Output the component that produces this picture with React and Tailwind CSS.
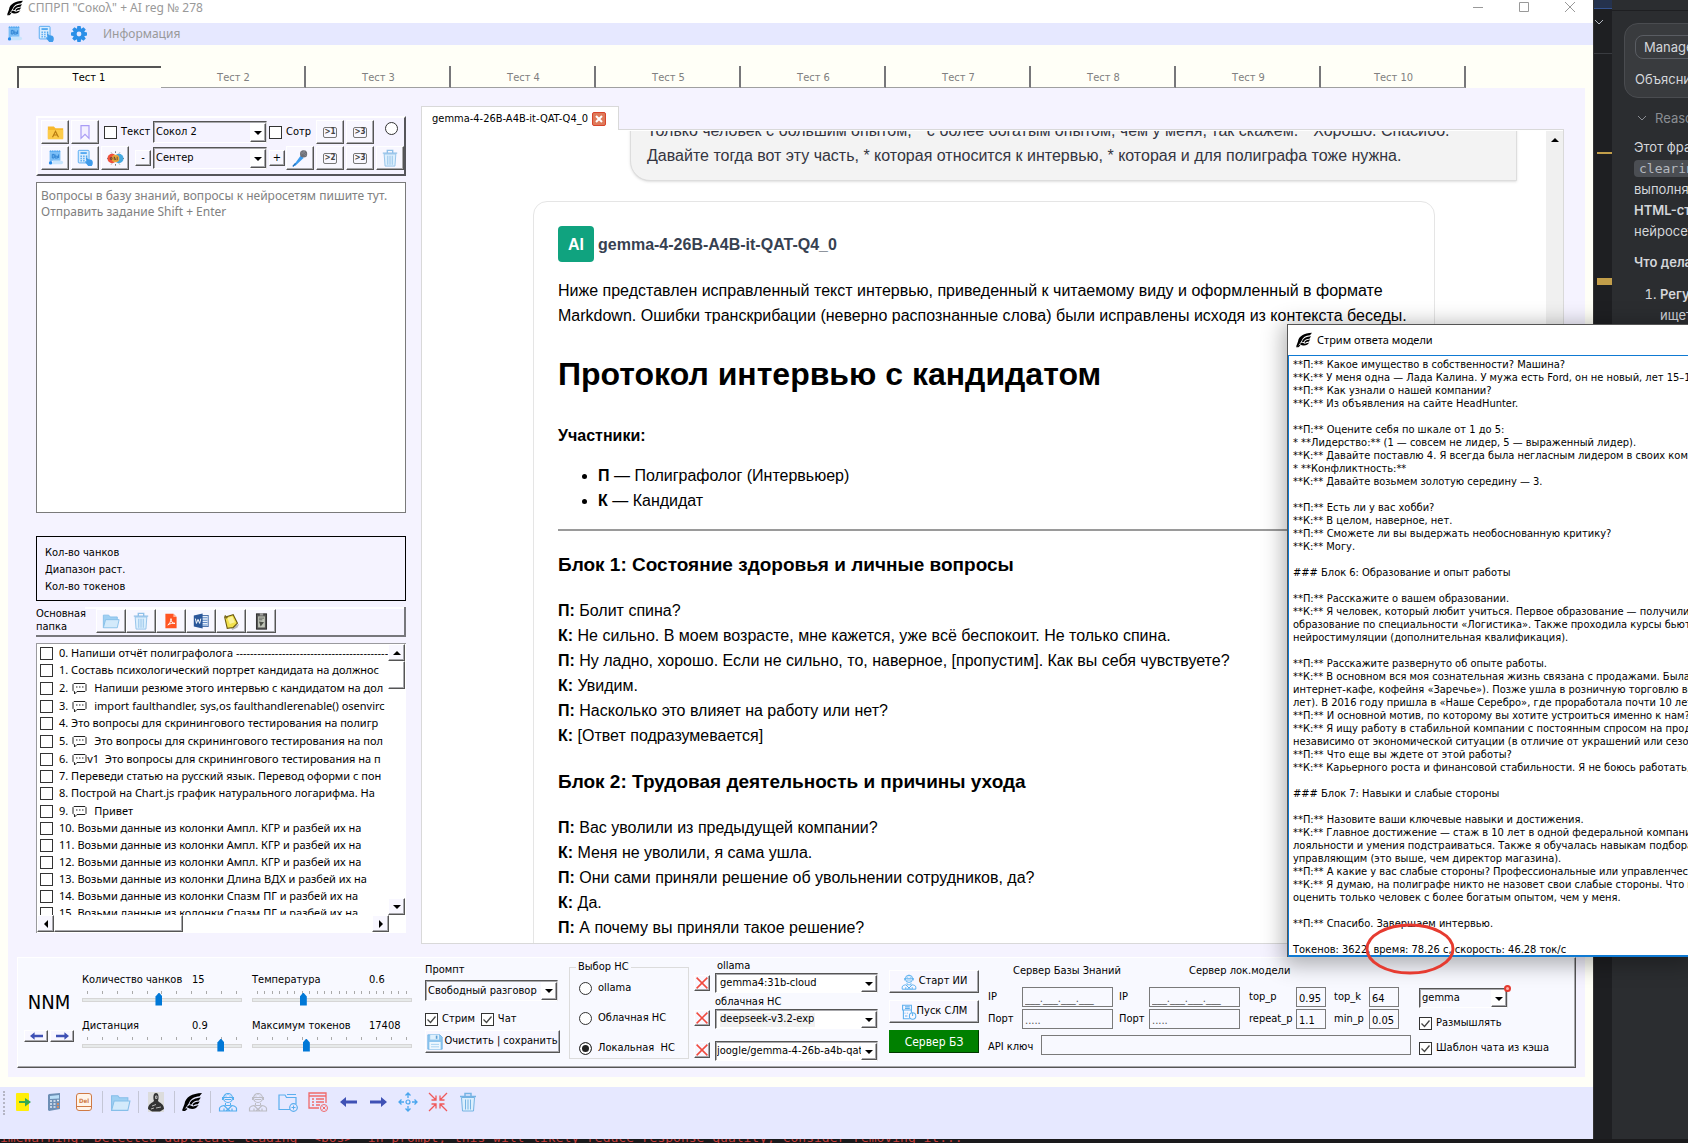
import React from "react";

const ui = "font-['DejaVu_Sans_Condensed','DejaVu_Sans',sans-serif]";
const segoe = "font-['Noto_Sans','Open_Sans',sans-serif]";
const raised =
  "border border-t-white border-l-white border-r-[#555555] border-b-[#555555] shadow-[inset_-1px_-1px_0_#a8a8ac]";

/* ---------- icons ---------- */

function Svg({ size = 20, box = 20, className = "", children }) {
  return (
    <svg width={size} height={size} viewBox={`0 0 ${box} ${box}`} fill="none" className={`shrink-0 ${className}`} aria-hidden="true">
      {children}
    </svg>
  );
}

function Falcon({ size = 16 }) {
  return (
    <Svg size={size}>
      <g fill="#000">
        <path d="M2.500 12C3.500 5 10 1.500 20 1L17.500 4.200C12 4.500 8.500 7 7 11L5 14L2 18L0 18.500Z" />
        <path d="M8 10.500C10 7.500 13 6 18.800 5.400L16.800 8.400C13 8.500 11 9.800 9.500 12.500L7.500 12.500Z" />
        <path d="M10.500 12.500C11.800 10.400 14 9.600 17.800 9.400L15.800 12.200C13.500 12.200 12.500 12.600 11.500 13.800Z" />
        <path d="M4.500 15L7.500 13L11 14.600L16.800 13L14 16C11 17.500 8 17.300 4.500 15Z" />
        <path d="M0 19L4 16L5.500 17L3 19Z" />
      </g>
    </Svg>
  );
}

function Scroll() {
  return (
    <Svg size={18}>
      <path d="M4 2h12v11H7l-1.500 3H4z" fill="#7cbff7" />
      <path d="M4 3l1-2 1 2 1-2 1 2 1-2 1 2 1-2 1 2 1-2 1 2 1-2 1 2" fill="#4aa2ee" />
      <path d="M9 6H7v4h2zM10 6v4h3V8h-3M14 6v4" stroke="#2a7fd0" strokeWidth="1" />
      <path d="M8 13h9a2 2 0 0 1 0 4H6z" fill="#c8e4fc" />
      <circle cx="5" cy="15.500" r="1.800" fill="#2388ea" />
    </Svg>
  );
}

function CalcHand() {
  return (
    <Svg size={18}>
      <rect x="2.500" y="1.500" width="12" height="14" rx="1" fill="#d9ecfd" stroke="#4ea6f0" />
      <path d="M5 4.500h7" stroke="#4ea6f0" strokeWidth="2" />
      <path d="M5 8h1.500M8 8h1.500M11 8h1.500M5 10.500h1.500M8 10.500h1.500M5 13h1.500M8 13h1.500" stroke="#4ea6f0" strokeWidth="1.500" />
      <path d="M11 9.500c1.500-1 2 0 2 1.500l4 1c1.500.5 2 3 1.500 5l-1 2h-4l-3.500-4.500c0-1 1-1 1.500-.5z" fill="#3f9bea" />
    </Svg>
  );
}

function Gear() {
  const teeth = [0, 45, 90, 135, 180, 225, 270, 315];
  return (
    <Svg size={16}>
      {teeth.map((a) => (
        <path key={a} d="M8 0h4l1 5H7z" fill="#2b8fe8" transform={`rotate(${a} 10 10)`} />
      ))}
      <circle cx="10" cy="10" r="5" stroke="#2b8fe8" strokeWidth="4" />
    </Svg>
  );
}

function FolderA() {
  return (
    <Svg size={17}>
      <path d="M1 3h7l2 2h9v12H1z" fill="#f7b82c" />
      <path d="M1 7h18v11H1z" fill="#fccb4a" />
      <path d="M6.500 15.500L10 8.500l3.500 7M8 13h4.500" stroke="#b87a10" strokeWidth="1.300" />
    </Svg>
  );
}

function Bookmark() {
  return (
    <Svg size={16}>
      <path d="M5 2h10v16l-5-5-5 5z" fill="#f3f0ff" stroke="#a99cf5" strokeWidth="1.500" />
    </Svg>
  );
}

function Rna() {
  return (
    <Svg size={17}>
      <circle cx="6" cy="10" r="5.500" fill="#f0513c" />
      <circle cx="14" cy="10" r="5.500" fill="#45a9e0" />
      <circle cx="10" cy="10" r="4.500" fill="#e9a63b" />
      <path d="M8.500 8v4M8.500 8l2 4M12 8v4M4 9h2v2H4z" stroke="#5b4630" strokeWidth="1" />
      <path d="M10 1.500v2M10 16.500v2M0 10h1M19 10h1M5 3l.7 1M15 3l-.7 1M5 17l.7-1M15 17l-.7-1" stroke="#666" />
    </Svg>
  );
}

function Slot({ n }) {
  return (
    <span className="flex h-[11px] w-[14px] items-center justify-center rounded-[2px] border border-[#777] text-[8px] leading-[8px] font-bold text-[#444]">
      &gt;{n}
    </span>
  );
}

function Mic() {
  return (
    <Svg size={18}>
      <path d="M3 18L11 7l3 3L4.500 19z" fill="#3b9bee" />
      <circle cx="14" cy="5.500" r="4" fill="#6d6f76" />
      <path d="M11 3l6 5M13 2l4 4M11 6l5-4" stroke="#8e9097" strokeWidth=".7" />
      <path d="M2 19.500L5 16" stroke="#1d6fc0" strokeWidth="1.500" />
    </Svg>
  );
}

function Trash({ size = 18, stroke = "#8fc0e8" }) {
  return (
    <Svg size={size}>
      <path d="M3.500 5.500h13l-1 13.500h-11z" fill="#dceffd" stroke={stroke} />
      <path d="M2 4.500h16M7 4V1.500h6V4" stroke={stroke} strokeWidth="1.500" />
      <path d="M7.500 7.500v10M10 7.500v10M12.500 7.500v10" stroke={stroke} />
    </Svg>
  );
}

function Folder({ size = 18 }) {
  return (
    <Svg size={size}>
      <path d="M1.500 17.500v-14h6l1.500 2h8v4" fill="#9fd0f3" stroke="#86bfe9" />
      <path d="M1.500 17.500l2.500-9h15l-2 9z" fill="#d3eafb" stroke="#86bfe9" />
    </Svg>
  );
}

function Pdf() {
  return (
    <Svg size={16}>
      <path d="M3 1h10l4 4v14H3z" fill="#ff5422" />
      <path d="M13 1v4h4z" fill="#ffb29a" />
      <path d="M6 15c2-1 4-5 4-8 0 4 2 6 5 6-3-.5-6 0-9 2z" stroke="#fff" strokeWidth="1.200" />
    </Svg>
  );
}

function Word() {
  return (
    <Svg size={16}>
      <rect x="9" y="3" width="10" height="14" fill="#e9f0fa" stroke="#2b579a" />
      <path d="M11 6h7M11 9h7M11 12h7M11 15h7" stroke="#5f89c6" strokeWidth="1.300" />
      <path d="M1 3l11-2.500v19L1 17z" fill="#2b579a" />
      <path d="M3 7l1.300 6L6.300 8l2 5L9.800 7" stroke="#fff" strokeWidth="1.200" />
    </Svg>
  );
}

function Note() {
  return (
    <Svg size={17}>
      <path d="M9 17l10-4-2 4-6 3z" fill="#777" opacity=".5" />
      <path d="M2 5l10-3 5 10-5 5-7 1z" fill="#f2e14c" stroke="#6b5a10" strokeWidth="1.300" />
      <path d="M5 6l6-2 3 7-6 2z" fill="#fbf29b" />
      <path d="M2 3l3 3" stroke="#7a6a20" strokeWidth="2" />
    </Svg>
  );
}

function Clipboard() {
  return (
    <Svg size={17}>
      <rect x="4" y="1" width="12" height="18" fill="#555" stroke="#222" />
      <rect x="6" y="4" width="8" height="13" fill="#bfc4b8" />
      <path d="M7 10l6 1-4 5z" fill="#4d5148" />
      <path d="M7 6h6M7 8h4" stroke="#555" />
      <rect x="8" y="0" width="4" height="3" fill="#999" />
    </Svg>
  );
}

function Bubble() {
  return (
    <svg width="15" height="13" viewBox="0 0 15 13" fill="none" className="shrink-0" aria-hidden="true">
      <path d="M2 1.500h11l1 1v6l-1 1H5l-2.500 2.500v-2.500H2l-1-1v-6z" stroke="#222" />
      <path d="M4 5h1.500M7 5h1.500M10 5h1.500" stroke="#222" />
    </svg>
  );
}

function Arrow({ dir = "left", w = 17 }) {
  return (
    <svg width={w} height={Math.round(w / 1.700)} viewBox="0 0 17 10" aria-hidden="true">
      <path d={dir === "left" ? "M0 5l6-5v3.500h11v3H6V10z" : "M17 5l-6-5v3.500H0v3h11V10z"} fill="#3f51b5" />
    </svg>
  );
}

function Floppy() {
  return (
    <Svg size={16}>
      <path d="M1 1h15l3 3v15H1z" fill="#8fc6ee" stroke="#6ab0e4" />
      <rect x="4" y="1" width="11" height="6" fill="#dff0fc" />
      <rect x="11" y="2" width="2" height="4" fill="#5d9fd4" />
      <rect x="3" y="10" width="14" height="9" fill="#eef8ff" />
      <path d="M5 13h10M5 16h10" stroke="#9ccbee" />
    </Svg>
  );
}

function Robot({ size = 18, color = "#53aeef" }) {
  return (
    <Svg size={size}>
      <circle cx="10" cy="6" r="4.500" stroke={color} strokeWidth="1.200" />
      <path d="M5.500 5.500h9M7 7.500h6M10 1v2M7.500 4h1M11.500 4h1M7.500 11v2.500h5V11M4.500 5v3M15.500 5v3" stroke={color} />
      <path d="M1.500 19v-2.500c0-2 2-2.500 4.500-3l4 4 4-4c2.500.5 4.500 1 4.500 3V19zM6 19v-2.500M14 19v-2.500M8 19l2-2 2 2" stroke={color} strokeWidth="1.200" />
    </Svg>
  );
}

function ServerPower() {
  return (
    <Svg size={16}>
      <path d="M2 1.500h11v6H2zM2 7.500h11M3 7.500v11h8M13 8v3M5 3.500h6M5 5.500h6M5 11v1M8 11v1M5 15h3" stroke="#5fb0ee" strokeWidth="1.400" />
      <circle cx="14.500" cy="15" r="4" stroke="#5fb0ee" strokeWidth="1.300" />
      <path d="M14.500 11v4" stroke="#5fb0ee" strokeWidth="1.300" />
    </Svg>
  );
}

function RedX() {
  return (
    <Svg size={12}>
      <path d="M1 1l18 18M19 1L1 19" stroke="#f04a3e" strokeWidth="2.500" />
    </Svg>
  );
}

function ExitIcon() {
  return (
    <Svg size={20}>
      <rect x="2" y="1" width="13" height="18" rx="1" fill="#ffee0a" />
      <path d="M5 9h6V6l6 4-6 4.500V11H5z" fill="#35a852" />
    </Svg>
  );
}

function Calculator() {
  return (
    <Svg size={20}>
      <path d="M5 2l11-1v16l-11 2-1-1V3z" fill="#6d8fb5" />
      <path d="M6 4l9-1v3.500l-9 .5z" fill="#b9def8" />
      <path d="M6 9h2M9.500 9h2M13 8.500h2M6 12h2M9.500 12h2M6 15h2M9.500 15h2" stroke="#e4edf6" strokeWidth="1.700" />
      <path d="M13 12h2M13 15h2" stroke="#f08a4b" strokeWidth="1.700" />
    </Svg>
  );
}

function DelKey() {
  return (
    <span className="relative flex h-[18px] w-[16px] justify-center rounded-[3px] border border-[#cf7a45] bg-[#fff4ea] pt-px text-[6px] leading-[11px] font-bold text-[#cf7a45]">
      Del
      <span className="absolute inset-x-0 bottom-[3px] h-px bg-[#cf7a45]" />
    </span>
  );
}

function Portrait() {
  return (
    <Svg size={20}>
      <rect x="2" y="0" width="16" height="20" fill="#dcdcdc" />
      <path d="M2 17c0-5 4-6 6-8-1-3-1-8 2-8s3 5 2 8c2 2 6 3 6 8l-4 2.500H6z" fill="#333" />
      <path d="M9.500 4h1.500v2.500h-1.500zM6 14l4-1.500M10 16l5-1M5 17l3-1" stroke="#b5b5b5" />
    </Svg>
  );
}

function FolderPlus() {
  return (
    <Svg size={20}>
      <path d="M12 17.500H1V3h6l1.500 2.500H18V12M9 2.500h9" stroke="#5aaeee" strokeWidth="1.200" />
      <circle cx="15.500" cy="15.500" r="3.800" stroke="#5aaeee" strokeWidth="1.200" />
      <path d="M13.500 15.500h4M15.500 13.500v4" stroke="#5aaeee" />
    </Svg>
  );
}

function ListRemove() {
  return (
    <Svg size={20}>
      <path d="M11 16H1V1h17v10M1 4h17M4 7h2M8 7h8M4 10h2M8 10h8M4 13h2M8 13h4" stroke="#f0696b" strokeWidth="1.300" />
      <circle cx="16" cy="16" r="3.500" stroke="#f0696b" />
      <path d="M14.500 14.500l3 3M17.500 14.500l-3 3" stroke="#f0696b" />
    </Svg>
  );
}

function Expand() {
  return (
    <Svg size={20}>
      <circle cx="10" cy="10" r="2" stroke="#4aa6ee" strokeWidth="1.200" />
      <path d="M10 1v5M10 14v5M1 10h5M14 10h5M7.500 3.500L10 1l2.500 2.500M7.500 16.500L10 19l2.500-2.500M3.500 7.500L1 10l2.500 2.500M16.500 7.500L19 10l-2.500 2.500" stroke="#4aa6ee" strokeWidth="1.300" />
    </Svg>
  );
}

function Shrink() {
  return (
    <Svg size={20}>
      <path d="M1 1l7 7M19 1l-7 7M1 19l7-7M19 19l-7-7M8 3.500V8H3.500M12 3.500V8h4.500M8 16.500V12H3.500M12 16.500V12h4.500" stroke="#f0595b" strokeWidth="1.300" />
    </Svg>
  );
}

function Tri({ dir }) {
  const d = { up: "M0 5L4 1l4 4z", down: "M0 1h8L4 5z", left: "M5 0v8L1 4z", right: "M1 0v8l4-4z" }[dir];
  return (
    <svg width="8" height="8" viewBox={dir === "up" || dir === "down" ? "0 -1 8 8" : "-1 0 8 8"} aria-hidden="true">
      <path d={d} fill="#000" />
    </svg>
  );
}

/* ---------- controls ---------- */

function Btn({ label, className = "h-6 w-7", children, ...rest }) {
  return (
    <button type="button" aria-label={label} className={`flex shrink-0 items-center justify-center bg-[#f8f7ff] ${raised} ${className}`} {...rest}>
      {children}
    </button>
  );
}

function Select({ label, value, className = "", selected = false, align = "pl-1 pr-4" }) {
  return (
    <span className={`relative flex shrink-0 border border-t-[#555] border-l-[#555] border-r-[#d8d8dc] border-b-white shadow-[inset_1px_1px_0_#a8a8ac] ${className}`}>
      <select aria-label={label} className={`w-full appearance-none overflow-hidden bg-transparent pt-px text-clip outline-none ${align}`}>
        <option>{value}</option>
      </select>
      <span className={`pointer-events-none absolute top-px right-0 bottom-0 flex w-4 items-center justify-center bg-white ${raised}`}>
        <Tri dir="down" />
      </span>
      {selected && <span className="pointer-events-none absolute top-[3px] left-1 h-[14px] w-[95px] bg-black/5" />}
    </span>
  );
}

function Check({ label, checked = false, className = "gap-1" }) {
  return (
    <label className={`flex shrink-0 items-center ${className}`}>
      <span className="grid">
        <input
          type="checkbox"
          defaultChecked={checked}
          className="peer col-start-1 row-start-1 h-[13px] w-[13px] appearance-none border border-[#333] bg-white"
        />
        <svg viewBox="0 0 13 13" className="pointer-events-none invisible col-start-1 row-start-1 h-[13px] w-[13px] peer-checked:visible" fill="none" aria-hidden="true">
          <path d="M2.500 6.500l3 3 5-6" stroke="#444" strokeWidth="1.300" />
        </svg>
      </span>
      <span className="whitespace-nowrap">{label}</span>
    </label>
  );
}

function Radio({ label, name, checked = false, bare = false }) {
  return (
    <label className="flex h-[14px] items-center gap-[6px]">
      <input
        type="radio"
        name={name}
        defaultChecked={checked}
        aria-label={label}
        className="h-[13px] w-[13px] shrink-0 appearance-none rounded-full border border-[#333] bg-white checked:bg-[#222] checked:shadow-[inset_0_0_0_2px_#fff]"
      />
      {!bare && <span className="whitespace-pre">{label}</span>}
    </label>
  );
}

function Slider({ id, label, value, min, max, now, ticks, valueAt }) {
  return (
    <div className="w-[160px]">
      <div className="flex h-4 items-center">
        <label htmlFor={id} className={`whitespace-nowrap ${valueAt}`}>{label}</label>
        <output htmlFor={id}>{value}</output>
      </div>
      <div className="mt-[3px] flex h-[3px] justify-between px-[5px]">
        {Array.from({ length: ticks }, (_, i) => (
          <span key={i} className="w-px bg-[#aaaaaa]" />
        ))}
      </div>
      <input
        id={id}
        type="range"
        min={min}
        max={max}
        step="any"
        defaultValue={now}
        className="-mt-px block h-[13px] w-full appearance-none bg-transparent [&::-webkit-slider-runnable-track]:h-1 [&::-webkit-slider-runnable-track]:border [&::-webkit-slider-runnable-track]:border-[#d6d6d6] [&::-webkit-slider-runnable-track]:bg-[#e7eaea] [&::-webkit-slider-thumb]:-mt-[6px] [&::-webkit-slider-thumb]:h-[13px] [&::-webkit-slider-thumb]:w-[7px] [&::-webkit-slider-thumb]:appearance-none [&::-webkit-slider-thumb]:bg-[#0078d7] [&::-webkit-slider-thumb]:[clip-path:polygon(50%_0,100%_30%,100%_100%,0_100%,0_30%)]"
      />
    </div>
  );
}

function Field({ label, value = "", className = "" }) {
  return <input type="text" aria-label={label} defaultValue={value} className={`h-5 min-w-0 border border-[#7a7a7a] bg-[#f8f9ff] px-[2px] pt-[2px] outline-none ${className}`} />;
}

/* ---------- left column ---------- */

const prompts = [
  ["0. Напиши отчёт полиграфолога -------------------------------------------"],
  ["1. Составь психологический портрет кандидата на должнос"],
  ["2.", "Напиши резюме этого интервью с кандидатом на дол"],
  ["3.", "import faulthandler, sys,os faulthandlerenable() osenvirc"],
  ["4. Это вопросы для скринингового тестирования на полигр"],
  ["5.", "Это вопросы для скринингового тестирования на пол"],
  ["6.", "v1  Это вопросы для скринингового тестирования на п"],
  ["7. Переведи статью на русский язык. Перевод оформи с пон"],
  ["8. Построй на Chart.js график натурального логарифма. На"],
  ["9.", "Привет"],
  ["10. Возьми данные из колонки Ампл. КГР и разбей их на"],
  ["11. Возьми данные из колонки Ампл. КГР и разбей их на"],
  ["12. Возьми данные из колонки Ампл. КГР и разбей их на"],
  ["13. Возьми данные из колонки Длина ВДХ и разбей их на"],
  ["14. Возьми данные из колонки Спазм ПГ и разбей их на"],
  ["15. Возьми данные из колонки Спазм ПГ и разбей их на"],
];

function ToolPanel() {
  return (
    <div className="flex h-[60px] shrink-0 flex-col gap-[2px] border-2 border-t-white border-l-white border-r-[#55555a] border-b-[#55555a] pt-[2px] pl-[3px]">
      <div className="flex h-6 items-center">
        <Btn label="Папка"><FolderA /></Btn>
        <Btn label="Закладка" className="ml-[2px] h-6 w-7"><Bookmark /></Btn>
        <Check label="Текст" className="ml-[5px] w-[49px] gap-1" />
        <Select label="Модель" value="Сокол 2" className="h-[22px] w-[114px]" align="pl-[2px] pr-4" />
        <Check label="Сотр" className="ml-[2px] w-[47px] gap-1" />
        <Btn label="Слот 1"><Slot n="1" /></Btn>
        <Btn label="Слот 3" className="ml-[2px] h-6 w-7"><Slot n="3" /></Btn>
        <span className="-mt-2 ml-[11px]"><Radio label="Запись" name="rec" bare /></span>
      </div>
      <div className="flex h-6 items-center">
        <Btn label="Свиток"><Scroll /></Btn>
        <Btn label="Калькулятор" className="ml-[2px] h-6 w-7"><CalcHand /></Btn>
        <Btn label="РНК" className="ml-[2px] h-6 w-7"><Rna /></Btn>
        <Btn label="Меньше" className="ml-[6px] h-4 w-4 leading-[12px]">-</Btn>
        <Select label="Голос" value="Сентер" className="ml-[2px] h-[22px] w-[114px]" align="pl-[2px] pr-4" />
        <Btn label="Больше" className="ml-[2px] h-4 w-4 leading-[12px]">+</Btn>
        <Btn label="Микрофон" className="ml-px h-6 w-7"><Mic /></Btn>
        <Btn label="Слот 2" className="ml-[2px] h-6 w-7"><Slot n="2" /></Btn>
        <Btn label="Слот 4" className="ml-[2px] h-6 w-7"><Slot n="3" /></Btn>
        <Btn label="Удалить" className="ml-[2px] h-6 w-7"><Trash /></Btn>
      </div>
    </div>
  );
}

function PromptList() {
  return (
    <div className="flex h-[290px] shrink-0 flex-col border-t border-l border-[#9a9a9e] bg-white">
      <div className="flex h-[271px] shrink-0">
        <ul className={`flex-1 overflow-hidden pt-px pl-[3px] text-[11px] ${segoe}`}>
          {prompts.map(([head, tail], i) => (
            <li key={i} className={tail ? "h-[18px]" : "h-[17px]"}>
              <label className="flex h-full items-center gap-[6px]">
                <input type="checkbox" className="h-[13px] w-[13px] shrink-0 appearance-none border border-[#333] bg-white" />
                {tail ? (
                  <span className="flex items-center gap-1 whitespace-pre">
                    {head}
                    <span className="flex items-center">
                      <Bubble />
                      <span className={tail.startsWith("v1") ? "" : "ml-[7px]"}>{tail}</span>
                    </span>
                  </span>
                ) : (
                  <span className="whitespace-nowrap">{head}</span>
                )}
              </label>
            </li>
          ))}
        </ul>
        <div className="flex w-[18px] shrink-0 flex-col pr-px">
          <Btn label="Вверх" className="h-[17px] w-[17px]"><Tri dir="up" /></Btn>
          <div className={`h-7 w-[17px] bg-white ${raised}`} />
          <Btn label="Вниз" className="mt-auto h-[17px] w-[17px]"><Tri dir="down" /></Btn>
        </div>
      </div>
      <div className="flex h-[17px] w-[352px] shrink-0">
        <Btn label="Влево" className="h-[17px] w-[17px]"><Tri dir="left" /></Btn>
        <div className={`h-[17px] w-[129px] bg-white ${raised}`} />
        <Btn label="Вправо" className="ml-auto h-[17px] w-[17px]"><Tri dir="right" /></Btn>
      </div>
    </div>
  );
}

function LeftColumn() {
  const files = [
    ["Открыть", <Folder />],
    ["Удалить", <Trash />],
    ["PDF", <Pdf />],
    ["Word", <Word />],
    ["Заметка", <Note />],
    ["Буфер", <Clipboard />],
  ];
  return (
    <section className="flex w-[370px] shrink-0 flex-col pt-7 pb-6">
      <ToolPanel />
      <textarea
        aria-label="Вопрос"
        placeholder={"Вопросы в базу знаний, вопросы к нейросетям пишите тут.\nОтправить задание Shift + Enter"}
        className={`mt-[6px] min-h-0 flex-1 resize-none border border-[#7a7a7a] bg-white px-1 py-[5px] text-[12px] leading-4 outline-none placeholder:text-[#808080] ${segoe}`}
      />
      <div className="mt-[23px] flex h-[65px] shrink-0 flex-col justify-center border border-black pt-px pl-2 leading-[17px]">
        <p>Кол-во чанков</p>
        <p>Диапазон раст.</p>
        <p>Кол-во токенов</p>
      </div>
      <div className="mt-[6px] flex h-[30px] shrink-0 items-start border-r-2 border-b-2 border-[#77777c]">
        <p className="w-[49px] leading-[13px]">Основная папка</p>
        <div className="flex flex-1 border-t-2 border-white pl-[11px]">
          {files.map(([name, icon]) => (
            <Btn key={name} label={name} className="h-6 w-[30px]">{icon}</Btn>
          ))}
        </div>
      </div>
      <div className="mt-[6px]">
        <PromptList />
      </div>
    </section>
  );
}

/* ---------- document view ---------- */

function Says({ who, children }) {
  return (
    <p>
      <b>{who}:</b> {children}
    </p>
  );
}

function DocumentView() {
  return (
    <section className="flex min-w-0 flex-1 flex-col pt-[18px] pb-[13px]">
      <div className="relative z-10 -mb-px flex h-6 w-[198px] items-center gap-1 border border-b-0 border-[#d9d9d9] bg-white pl-[10px]">
        <span className="pt-px">gemma-4-26B-A4B-it-QAT-Q4_0</span>
        <button type="button" aria-label="Закрыть" className="flex h-[14px] w-[14px] items-center justify-center rounded-[2px] border border-[#d9442b] bg-[#de7a5a]">
          <Svg size={8} box={8}><path d="M1 1l6 6M7 1L1 7" stroke="#fff" strokeWidth="2" /></Svg>
        </button>
      </div>
      <div className="flex min-h-0 flex-1 border border-[#d9d9d9] bg-white pt-px">
        <div className="min-w-0 flex-1 overflow-hidden font-['Liberation_Sans',Arial,sans-serif] text-[16px] leading-[25px] text-black">
          <div className="-mt-[14px] mr-[29px] ml-[208px] rounded-bl-[20px] border border-[#dddddd] bg-[#f3f3f3] px-4 pb-3 text-[#343541] shadow-sm">
            <p className="whitespace-nowrap">Только человек с большим опытом, * с более богатым опытом, чем у меня, так скажем. * Хорошо. Спасибо.</p>
            <p className="whitespace-nowrap">Давайте тогда вот эту часть, * которая относится к интервью, * которая и для полиграфа тоже нужна.</p>
          </div>
          <article className="mx-[111px] mt-5 rounded-[14px] border border-[#e5e5e5] p-6">
            <div className="flex items-center gap-1">
              <span className="flex h-9 w-9 items-center justify-center rounded bg-[#10a37f] font-bold text-white">AI</span>
              <b className="text-[#374151]">gemma-4-26B-A4B-it-QAT-Q4_0</b>
            </div>
            <p className="mt-4">
              Ниже представлен исправленный текст интервью, приведенный к читаемому виду и оформленный в формате Markdown. Ошибки транскрибации (неверно распознанные слова) были исправлены исходя из контекста беседы.
            </p>
            <h1 className="mt-[26px] text-[32px] leading-10 font-bold">Протокол интервью с кандидатом</h1>
            <p className="mt-[29px] font-bold">Участники:</p>
            <ul className="mt-[15px] list-disc pl-10">
              <li><b>П</b> — Полиграфолог (Интервьюер)</li>
              <li><b>К</b> — Кандидат</li>
            </ul>
            <hr className="mt-4 border-t-2 border-[#9a9a9a]" />
            <h3 className="mt-5 mb-[19px] text-[19px] leading-7 font-bold">Блок 1: Состояние здоровья и личные вопросы</h3>
            <Says who="П">Болит спина?</Says>
            <Says who="К">Не сильно. В моем возрасте, мне кажется, уже всё беспокоит. Не только спина.</Says>
            <Says who="П">Ну ладно, хорошо. Если не сильно, то, наверное, [пропустим]. Как вы себя чувствуете?</Says>
            <Says who="К">Увидим.</Says>
            <Says who="П">Насколько это влияет на работу или нет?</Says>
            <Says who="К">[Ответ подразумевается]</Says>
            <h3 className="mt-5 mb-[19px] text-[19px] leading-7 font-bold">Блок 2: Трудовая деятельность и причины ухода</h3>
            <Says who="П">Вас уволили из предыдущей компании?</Says>
            <Says who="К">Меня не уволили, я сама ушла.</Says>
            <Says who="П">Они сами приняли решение об увольнении сотрудников, да?</Says>
            <Says who="К">Да.</Says>
            <Says who="П">А почему вы приняли такое решение?</Says>
          </article>
        </div>
        <div className="flex w-[17px] shrink-0 justify-center bg-[#f0f0f0] pt-[5px]">
          <Tri dir="up" />
        </div>
      </div>
    </section>
  );
}

/* ---------- settings strip ---------- */

function Settings() {
  return (
    <section className="mx-[9px] flex h-[111px] shrink-0 items-start border border-t-white border-l-white border-r-[#555] border-b-[#555] bg-[#f8f9ff] pt-px pl-[6px] shadow-[inset_-1px_-1px_0_#a8a8ac]">
      <div className="w-[50px] shrink-0 pt-[31px]">
        <p className="text-center text-[20px] leading-6">NNM</p>
        <div className="mt-4 flex gap-[2px]">
          <Btn label="Назад" className="h-3 w-6"><Arrow w={13} /></Btn>
          <Btn label="Вперёд" className="h-3 w-6"><Arrow w={13} dir="right" /></Btn>
        </div>
      </div>
      <div className="ml-2 flex shrink-0 flex-col gap-3 pt-[13px]">
        <Slider id="chunks" label="Количество чанков" value="15" min={0} max={100} now={48} ticks={11} valueAt="w-[110px]" />
        <Slider id="distance" label="Дистанция" value="0.9" min={0} max={100} now={89} ticks={11} valueAt="w-[110px]" />
      </div>
      <div className="ml-[10px] flex shrink-0 flex-col gap-3 pt-[13px]">
        <Slider id="temp" label="Температура" value="0.6" min={0} max={100} now={31} ticks={21} valueAt="w-[117px]" />
        <Slider id="maxtok" label="Максимум токенов" value="17408" min={0} max={100} now={33} ticks={11} valueAt="w-[117px]" />
      </div>
      <div className="ml-[13px] w-[135px] shrink-0 pt-[3px]">
        <p className="leading-[15px]">Промпт</p>
        <Select label="Промпт" value="Свободный разговор" className="mt-[3px] h-[21px] w-[133px]" align="pl-[2px] pr-4" />
        <div className="mt-[11px] flex h-[14px] items-center gap-[6px]">
          <Check label="Стрим" checked />
          <Check label="Чат" checked />
        </div>
        <Btn className="mt-1 h-[23px] w-[135px] gap-px">
          <Floppy />
          <span className="whitespace-nowrap">Очистить | сохранить</span>
        </Btn>
      </div>
      <fieldset className="ml-[9px] h-[100px] w-[120px] shrink-0 border border-[#dcdcdc] pl-[9px]">
        <legend className="ml-[-3px] px-[2px] leading-4">Выбор НС</legend>
        <div className="flex flex-col gap-4 pt-[6px]">
          <Radio name="net" label="ollama" />
          <Radio name="net" label="Облачная НС" />
          <Radio name="net" label="Локальная  НС" checked />
        </div>
      </fieldset>
      <div className="ml-[5px] grid shrink-0 grid-cols-[16px_163px] grid-rows-[14px_20px_2px_14px_20px_12px_20px] gap-x-[5px]">
        <span className="col-start-2 row-start-1 pl-[2px] leading-[14px]">ollama</span>
        <Btn label="Удалить ollama" className="col-start-1 row-start-2 mt-[2px] h-4 w-4"><RedX /></Btn>
        <Select label="ollama" value="gemma4:31b-cloud" className="col-start-2 row-start-2 bg-white" />
        <span className="col-start-2 row-start-4 leading-[14px]">облачная НС</span>
        <Btn label="Удалить облачную" className="col-start-1 row-start-5 mt-px h-4 w-4"><RedX /></Btn>
        <Select label="облачная НС" value="deepseek-v3.2-exp" selected className="col-start-2 row-start-5 bg-white" />
        <Btn label="Удалить локальную" className="col-start-1 row-start-7 mt-px h-4 w-4"><RedX /></Btn>
        <Select label="локальная НС" value="joogle/gemma-4-26b-a4b-qat" className="col-start-2 row-start-7 bg-white" align="pl-[1px] pr-4" />
      </div>
      <div className="ml-[11px] flex w-[90px] shrink-0 flex-col gap-[7px] pt-[11px]">
        <Btn className="h-[23px] gap-[2px]"><Robot size={16} /> Старт ИИ</Btn>
        <Btn className="h-[23px]"><ServerPower /> Пуск СЛМ</Btn>
        <button type="button" className="h-[23px] border border-t-[#008000] border-l-[#008000] border-r-[#003800] border-b-[#003800] bg-[#008000] text-[12px] leading-5 text-white">Сервер БЗ</button>
      </div>
      <div className="ml-[9px] w-[423px] shrink-0 pt-1">
        <div className="flex h-4 items-center pl-[25px]">
          <span className="w-[176px]">Сервер Базы Знаний</span>
          <span>Сервер лок.модели</span>
        </div>
        <div className="mt-2 grid grid-cols-[34px_91px_6px_30px_91px_9px_47px_30px_8px_35px_30px] grid-rows-[20px_20px] items-center gap-y-[2px]">
          <span>IP</span>
          <Field label="IP базы знаний" value="___.___.___.___" className="text-[#555]" />
          <span />
          <span>IP</span>
          <Field label="IP модели" value="___.___.___.___" className="text-[#555]" />
          <span />
          <span>top_p</span>
          <Field label="top_p" value="0.95" />
          <span />
          <span>top_k</span>
          <Field label="top_k" value="64" />
          <span>Порт</span>
          <Field label="Порт базы знаний" value="....." className="text-[#555]" />
          <span />
          <span>Порт</span>
          <Field label="Порт модели" value="....." className="text-[#555]" />
          <span />
          <span>repeat_p</span>
          <Field label="repeat_p" value="1.1" />
          <span />
          <span>min_p</span>
          <Field label="min_p" value="0.05" />
        </div>
        <label className="mt-[6px] flex items-center">
          <span className="w-[53px] shrink-0 pt-1 whitespace-nowrap">API ключ</span>
          <Field label="API ключ" className="flex-1" />
        </label>
      </div>
      <div className="ml-2 flex-1 pt-[29px]">
        <div className="relative w-[89px]">
          <Select label="Шаблон" value="gemma" className="h-5 w-[89px]" align="pl-[2px] pr-4" />
          <span className="absolute -top-[3px] -right-[3px] h-[7px] w-[7px] rounded-full border-2 border-[#e63b30] bg-[#ffb4ae]" />
        </div>
        <Check label="Размышлять" checked className="mt-2 h-[14px] gap-1" />
        <Check label="Шаблон чата из кэша" checked className="mt-[11px] h-[14px] gap-1" />
      </div>
    </section>
  );
}

function BottomBar() {
  const items = [
    ["Выход", <ExitIcon />], ["Калькулятор", <Calculator />], ["Del", <DelKey />], null,
    ["Папка", <Folder size={21} />], null, ["Портрет", <Portrait />], null, ["Сокол", <Falcon size={20} />], null,
    ["Робот", <Robot size={20} />], ["Робот выключен", <Robot size={20} color="#bcbcc4" />],
    ["Новая папка", <FolderPlus />], ["Убрать список", <ListRemove />], ["Назад", <Arrow />],
    ["Вперёд", <Arrow dir="right" />], ["Развернуть", <Expand />], ["Свернуть", <Shrink />], ["Корзина", <Trash size={20} stroke="#76b3e3" />],
  ];
  return (
    <nav className="flex h-[52px] shrink-0 items-start bg-[#e6e8ff] pt-[2px] pl-[3px]">
      <span className="mt-[2px] mr-1 h-6 w-0 border-l-2 border-dotted border-[#b4b5c4]" />
      {items.map((it, i) =>
        it ? (
          <button key={i} type="button" aria-label={it[0]} className="flex h-[26px] w-[30px] items-center justify-center">{it[1]}</button>
        ) : (
          <span key={i} className="mx-[2px] mt-[2px] h-[22px] w-[2px] border-r border-[#c4c6d6]" />
        )
      )}
    </nav>
  );
}

/* ---------- windows ---------- */

function MainWindow() {
  return (
    <main className={`flex min-w-0 flex-1 flex-col border-r border-[#333] bg-[#fffff7] text-[11px] text-black ${ui}`}>
      <header className="flex h-[23px] shrink-0 items-start bg-white pl-[7px]">
        <Falcon size={16} />
        <h1 className={`ml-[5px] text-[12px] leading-4 text-[#999] ${segoe}`}>СППРП "Сокоλ" + AI reg № 278</h1>
        <div className="ml-auto flex h-[14px] items-center">
          <button type="button" aria-label="Свернуть" className="flex w-[46px] justify-center"><Svg size={12} box={12}><path d="M1 6.500h10" stroke="#999" /></Svg></button>
          <button type="button" aria-label="Развернуть" className="flex w-[46px] justify-center"><Svg size={12} box={12}><path d="M1.500 1.500h9v9h-9z" stroke="#999" /></Svg></button>
          <button type="button" aria-label="Закрыть" className="flex w-[46px] justify-center"><Svg size={12} box={12}><path d="M1 1l10 10M11 1L1 11" stroke="#999" /></Svg></button>
        </div>
      </header>
      <nav className="flex h-[22px] shrink-0 items-center bg-[#e6e8ff] pl-[5px]">
        <button type="button" aria-label="Свиток" className="w-8"><Scroll /></button>
        <button type="button" aria-label="Калькулятор" className="w-[34px]"><CalcHand /></button>
        <button type="button" aria-label="Настройки" className="w-8"><Gear /></button>
        <button type="button" className={`text-[12px] text-[#999] ${segoe}`}>Информация</button>
      </nav>
      <div role="tablist" className="mt-[21px] ml-[17px] flex h-[22px] shrink-0">
        {Array.from({ length: 10 }, (_, i) => (
          <button
            key={i}
            type="button"
            role="tab"
            aria-selected={i === 0}
            className={
              i === 0
                ? "w-[144px] border-t-2 border-l-2 border-[#555] pr-[2px] text-black"
                : "w-[145px] border-r-2 border-b border-r-[#77777a] border-b-[#a0a0a0] pt-1 pl-[2px] text-[#808080]"
            }
          >
            Тест {i + 1}
          </button>
        ))}
      </div>
      <div className="mx-2 flex min-h-0 flex-1 flex-col bg-[#f5f3ff] pb-[9px]">
        <div className="flex min-h-0 flex-1 gap-[15px] pr-[21px] pl-7">
          <LeftColumn />
          <DocumentView />
        </div>
        <Settings />
      </div>
      <div className="h-[10px] shrink-0" />
      <BottomBar />
    </main>
  );
}

function EditorPanel() {
  return (
    <aside className="flex w-[94px] shrink-0 overflow-hidden bg-[#1e1f22] font-['Inter',sans-serif] text-[13px] whitespace-nowrap text-[#d4d6da]">
      <div className="flex w-[18px] shrink-0 flex-col">
        <div className="h-[9px] border-b border-[#35538f] bg-[#25324d]" />
        <div className="flex h-[45px] items-center border-b border-[#393b40] pb-[18px]">
          <Svg size={10} box={10}><path d="M1 3l4 4 4-4" stroke="#b4b8bf" /></Svg>
        </div>
        <div className="mt-[98px] ml-[3px] h-[2px] bg-[#c29e4a]" />
        <div className="mt-[124px] ml-[3px] h-[7px] bg-[#c29e4a]" />
      </div>
      <div className="flex-1 overflow-hidden bg-[#2b2d30]">
        <div className="h-[11px] border-b border-[#1e1f22]" />
        <div className="mt-3 ml-3 h-[75px] w-[200px] rounded-[14px] border border-[#4a4c50] bg-[#393b3e] pt-[11px] pl-[10px]">
          <button type="button" className="flex h-6 w-[120px] items-center rounded-lg border border-[#5a5d63] pt-px pl-2">Manage</button>
          <p className="mt-[10px] leading-5">Объясни</p>
        </div>
        <p className="mt-[10px] flex items-center gap-[8px] pl-[25px] leading-5 text-[#8a8d93]">
          <Svg size={10} box={10}><path d="M1 3l4 4 4-4" stroke="#8a8d93" /></Svg>
          Reasoning
        </p>
        <div className="pl-[22px] leading-[21px]">
          <p className="mt-[9px]">Этот фрагмент</p>
          <p><code className="rounded bg-[#4b4e53] py-px pr-2 pl-[5px] font-['DejaVu_Sans_Mono',monospace] text-[13px] text-[#b4b8bf]">clearing</code></p>
          <p>выполняет</p>
          <p className="font-semibold">HTML-строк</p>
          <p>нейросети</p>
          <p className="mt-[10px] font-semibold">Что делает</p>
          <ol className="mt-[11px] list-decimal pl-[26px]">
            <li><b className="font-semibold">Регулярка</b><br />ищет</li>
          </ol>
        </div>
      </div>
    </aside>
  );
}

const stream = `**П:** Какое имущество в собственности? Машина?
**К:** У меня одна — Лада Калина. У мужа есть Ford, он не новый, лет 15–17.
**П:** Как узнали о нашей компании?
**К:** Из объявления на сайте HeadHunter.

**П:** Оцените себя по шкале от 1 до 5:
* **Лидерство:** (1 — совсем не лидер, 5 — выраженный лидер).
**К:** Давайте поставлю 4. Я всегда была негласным лидером в своих компаниях.
* **Конфликтность:**
**К:** Давайте возьмем золотую середину — 3.

**П:** Есть ли у вас хобби?
**К:** В целом, наверное, нет.
**П:** Сможете ли вы выдержать необоснованную критику?
**К:** Могу.

### Блок 6: Образование и опыт работы

**П:** Расскажите о вашем образовании.
**К:** Я человек, который любит учиться. Первое образование — получили
образование по специальности «Логистика». Также проходила курсы бьюти-
нейростимуляции (дополнительная квалификация).

**П:** Расскажите развернуто об опыте работы.
**К:** В основном вся моя сознательная жизнь связана с продажами. Была в
интернет-кафе, кофейня «Заречье»). Позже ушла в розничную торговлю верх
лет). В 2016 году пришла в «Наше Серебро», где проработала почти 10 лет.
**П:** И основной мотив, по которому вы хотите устроиться именно к нам?
**К:** Я ищу работу в стабильной компании с постоянным спросом на продукт
независимо от экономической ситуации (в отличие от украшений или сезонных
**П:** Что еще вы ждете от этой работы?
**К:** Карьерного роста и финансовой стабильности. Я не боюсь работать,

### Блок 7: Навыки и слабые стороны

**П:** Назовите ваши ключевые навыки и достижения.
**К:** Главное достижение — стаж в 10 лет в одной федеральной компании
лояльности и умения подстраиваться. Также я обучалась навыкам подбора и
управляющим (это выше, чем директор магазина).
**П:** А какие у вас слабые стороны? Профессиональные или управленческие
**К:** Я думаю, на полиграфе никто не назовет свои слабые стороны. Что к
оценить только человек с более богатым опытом, чем у меня.

**П:** Спасибо. Завершаем интервью.

Токенов: 3622, время: 78.26 с, скорость: 46.28 ток/с`;

function StreamWindow() {
  return (
    <section className={`absolute top-[324px] right-0 w-[401px] border-t border-l border-[#555] bg-white text-black shadow-[0_4px_20px_4px_rgba(0,0,0,0.3)] ${ui}`}>
      <header className="flex h-[30px] items-center gap-[5px] pl-2">
        <Falcon size={16} />
        <h2 className={`text-[11px] ${segoe}`}>Стрим ответа модели</h2>
      </header>
      <textarea
        readOnly
        aria-label="Стрим ответа модели"
        defaultValue={stream}
        className="block h-[602px] w-full resize-none overflow-hidden border-t border-b-2 border-l border-[#0f7ad3] bg-white pt-[2px] pl-1 text-[11px] leading-[13px] whitespace-pre outline-none"
      />
      <svg width="90" height="54" viewBox="0 0 90 54" fill="none" className="pointer-events-none absolute -bottom-[19px] left-[77px]" aria-hidden="true">
        <ellipse cx="45" cy="27" rx="43" ry="24" stroke="#e63b30" strokeWidth="3" />
      </svg>
    </section>
  );
}

export default function App() {
  return (
    <div className="relative flex h-screen flex-col overflow-hidden bg-[#1e1f22]">
      <div className="flex min-h-0 flex-1">
        <MainWindow />
        <EditorPanel />
      </div>
      <div className="flex h-1 shrink-0 items-end overflow-hidden bg-[#1a1a1c]">
        <p className="font-['DejaVu_Sans_Mono',monospace] text-[13px] leading-[10px] whitespace-nowrap text-[#c8403f]">
          imeWarning: Detected duplicate leading "&lt;bos&gt;" in prompt, this will likely reduce response quality, consider removing it...
        </p>
      </div>
      <StreamWindow />
    </div>
  );
}
